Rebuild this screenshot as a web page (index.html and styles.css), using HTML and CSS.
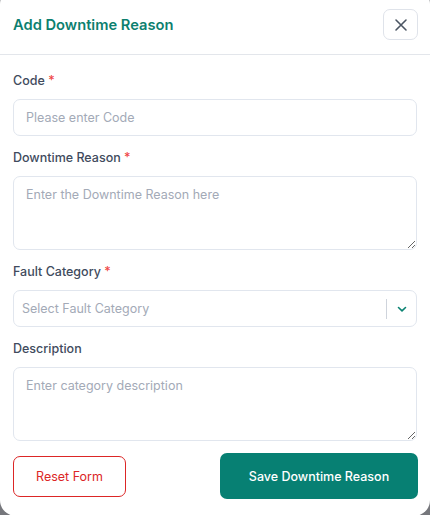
FILE: index.html
```html
<!DOCTYPE html>
<html>
<head>
<meta charset="utf-8">
<link rel="stylesheet" href="styles.css">
</head>
<body>
<div class="modal">
  <div class="header">
    <h2 class="title">Add Downtime Reason</h2>
    <button class="close" aria-label="Close">
      <svg width="14" height="14" viewBox="0 0 14 14"><path d="M2 2 L12 12 M12 2 L2 12" stroke="#4b5563" stroke-width="1.6" stroke-linecap="round" fill="none"/></svg>
    </button>
  </div>
  <div class="body">
    <div class="field">
      <label class="label">Code <span class="req">*</span></label>
      <input class="input" type="text" placeholder="Please enter Code">
    </div>
    <div class="field">
      <label class="label">Downtime Reason <span class="req">*</span></label>
      <textarea class="textarea" placeholder="Enter the Downtime Reason here"></textarea>
    </div>
    <div class="field">
      <label class="label">Fault Category <span class="req">*</span></label>
      <div class="select">
        <span class="select-ph">Select Fault Category</span>
        <span class="sep"></span>
        <span class="chev">
          <svg width="10" height="8" viewBox="0 0 10 8"><path d="M1.5 2.5 L5 5.8 L8.5 2.5" stroke="#0a8272" stroke-width="1.6" fill="none" stroke-linecap="round" stroke-linejoin="round"/></svg>
        </span>
      </div>
    </div>
    <div class="field">
      <label class="label">Description</label>
      <textarea class="textarea" placeholder="Enter category description"></textarea>
    </div>
    <div class="actions">
      <button class="btn-reset">Reset Form</button>
      <button class="btn-save">Save Downtime Reason</button>
    </div>
  </div>
</div>
</body>
</html>
```
FILE: styles.css
```css
html, body {
  margin: 0;
  padding: 0;
  background: #76777c;
  height: 515px;
  overflow: hidden;
}
body {
  font-family: Inter, "Noto Sans", sans-serif;
}
.modal {
  width: 430px;
  height: 528px;
  margin-top: -12px;
  background: #fff;
  border-radius: 16px;
  box-sizing: border-box;
}
.header {
  display: flex;
  align-items: center;
  justify-content: space-between;
  padding: 21px 13px 14px 13px;
  border-bottom: 1px solid #e3e6eb;
}
.title {
  margin: 0;
  font-size: 14.7px;
  font-weight: 600;
  color: #0d7f6f;
  letter-spacing: 0;
}
.close {
  width: 35px;
  height: 31px;
  border: 1px solid #dfe3ea;
  border-radius: 7px;
  background: #fff;
  display: flex;
  align-items: center;
  justify-content: center;
  padding: 0;
  margin-right: -1px;
}
.body {
  padding: 16px 13px 0 13px;
}
.field {
  display: flex;
  flex-direction: column;
  margin-bottom: 12px;
}
.label {
  font-size: 12.5px;
  line-height: 20px;
  font-weight: 500;
  color: #414b5d;
  margin-bottom: 8px;
}
.req {
  color: #ef4444;
}
.input, .textarea {
  font-family: Inter, "Noto Sans", sans-serif;
  font-size: 12.5px;
  border: 1px solid #e1e6ee;
  border-radius: 7px;
  box-sizing: border-box;
  width: 404px;
  padding: 0 12px;
  color: #111827;
  outline: none;
  margin: 0;
}
.input {
  height: 37px;
}
.textarea {
  height: 74px;
  padding-top: 10px;
  resize: vertical;
  display: block;
}
.input::placeholder, .textarea::placeholder {
  color: #a3aab7;
}
.select {
  height: 37px;
  box-sizing: border-box;
  width: 404px;
  border: 1px solid #e1e6ee;
  border-radius: 7px;
  display: flex;
  align-items: center;
  padding-left: 8px;
}
.select-ph {
  flex: 1;
  font-size: 12.5px;
  color: #a3aab7;
}
.sep {
  width: 1px;
  height: 20px;
  background: #cfd4dc;
}
.chev {
  width: 29px;
  display: flex;
  justify-content: center;
  align-items: center;
}
.actions {
  display: flex;
  align-items: center;
  justify-content: space-between;
  margin-top: 8px;
}
.btn-reset {
  width: 113px;
  height: 41px;
  border: 1px solid #dc2626;
  border-radius: 7px;
  background: #fff;
  color: #dc2626;
  font-family: Inter, "Noto Sans", sans-serif;
  font-size: 12.5px;
  font-weight: 400;
}
.btn-save {
  width: 198px;
  height: 46px;
  border: none;
  border-radius: 7px;
  background: #078073;
  color: #fff;
  font-family: Inter, "Noto Sans", sans-serif;
  font-size: 12.5px;
  font-weight: 500;
  margin-right: -1px;
}
```
